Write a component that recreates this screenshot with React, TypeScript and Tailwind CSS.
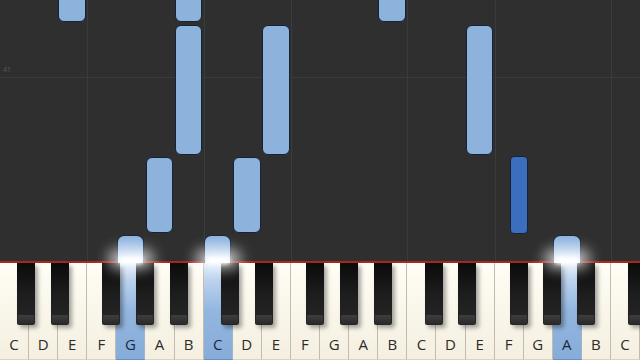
import React from "react";

const KW = 640 / 22;
const LETTERS = ["C", "D", "E", "F", "G", "A", "B"];
const LIT = [4, 7, 19];
const BLACK_OFFSETS = [17.4, 51, 102.4, 136, 170];
const GRID_X = [3, 7, 10, 14, 17, 21];

// falling notes: key index, top, bottom
const NOTES: { k: number; top: number; bottom: number }[] = [
  { k: 2, top: -8, bottom: 22 },
  { k: 6, top: -8, bottom: 22 },
  { k: 6, top: 25, bottom: 155 },
  { k: 5, top: 157, bottom: 233 },
  { k: 8, top: 157, bottom: 233 },
  { k: 9, top: 25, bottom: 155 },
  { k: 13, top: -8, bottom: 22 },
  { k: 16, top: 25, bottom: 155 },
];

const HITS = [4, 7, 19];

export default function App() {
  const blackKeys: number[] = [];
  for (let o = 0; o < 4; o++) {
    BLACK_OFFSETS.forEach((off) => {
      const x = o * KW * 7 + off;
      if (x < 640) blackKeys.push(x);
    });
  }

  return (
    <div className="relative w-[640px] h-[360px] flex flex-col bg-[#2f2f2f] overflow-hidden font-['Open_Sans','Liberation_Sans',sans-serif]">
      {/* note lane */}
      <div className="relative h-[261px]">
        {GRID_X.map((g) => (
          <div key={g} className="absolute top-0 bottom-0 w-px bg-[#3b3b3b]" style={{ left: g * KW }} />
        ))}
        <div className="absolute left-0 right-0 top-[77px] h-px bg-[#3b3b3b]" />
        <span className="absolute left-[3px] top-[66px] text-[7px] leading-none text-[#5a5a5a]">41</span>

        {NOTES.map((n, i) => (
          <div
            key={i}
            className="absolute rounded-[6px] border border-[#15233a] bg-[#8db2dc]"
            style={{ left: n.k * KW + 0.3, width: KW - 1.6, top: n.top, height: n.bottom - n.top }}
          />
        ))}

        {/* F# note */}
        <div className="absolute top-[156px] h-[78px] left-[510px] w-[18px] rounded-[4px] border border-[#15233a] bg-[#3b6fbe]" />

        {HITS.map((k) => (
          <div
            key={k}
            className="absolute top-[235px] h-[30px] rounded-t-[7px] border border-b-0 border-[#15233a] bg-gradient-to-b from-[#8db2dc] via-[#a9c6ea] to-[#eef4fd]"
            style={{ left: k * KW + 0.3, width: KW - 1.6 }}
          />
        ))}
      </div>

      <div className="h-[2px] bg-[#a8281e]" />

      {/* keyboard */}
      <div className="relative flex flex-1 bg-[#f7f3e6]">
        {Array.from({ length: 22 }).map((_, i) => {
          const lit = LIT.includes(i);
          return (
            <div
              key={i}
              className={
                lit
                  ? "flex-1 flex flex-col justify-end items-center pb-[7px] border-r border-[#9fb3cc] border-b border-b-[#6f8fb8] bg-gradient-to-b from-[#d2e2f5] via-[#93b6df] to-[#86acd9]"
                  : "flex-1 flex flex-col justify-end items-center pb-[7px] border-r border-[#c2bcad] border-b border-b-[#d9d3c3] bg-gradient-to-b from-[#fffdf5] to-[#f4efe0]"
              }
            >
              <span className={lit ? "text-[15px] leading-[16px] text-[#1c2a3d]" : "text-[15px] leading-[16px] text-[#2b2b2b]"}>
                {LETTERS[i % 7]}
              </span>
            </div>
          );
        })}

        {blackKeys.map((x, i) => (
          <div
            key={i}
            className="absolute top-0 h-[62px] w-[18px] flex flex-col rounded-b-[2px] bg-gradient-to-b from-[#0b0b0b] via-[#1d1d1d] to-[#262626] shadow-[3px_3px_4px_rgba(0,0,0,0.35)]"
            style={{ left: x }}
          >
            <div className="flex-1" />
            <div className="h-[9px] mx-[1px] mb-[1px] rounded-[1px] bg-gradient-to-b from-[#3e3e3e] to-[#2a2a2a]" />
          </div>
        ))}
      </div>

      {/* glows at hit line */}
      {HITS.map((k) => (
        <div key={k} className="absolute top-[249px] h-[20px] w-[46px] rounded-full bg-white/70 blur-[7px]" style={{ left: k * KW + KW / 2 - 23 }} />
      ))}
      {HITS.map((k) => (
        <div key={"c" + k} className="absolute top-[257px] h-[7px] w-[24px] rounded-full bg-white blur-[2px]" style={{ left: k * KW + KW / 2 - 12 }} />
      ))}
    </div>
  );
}
